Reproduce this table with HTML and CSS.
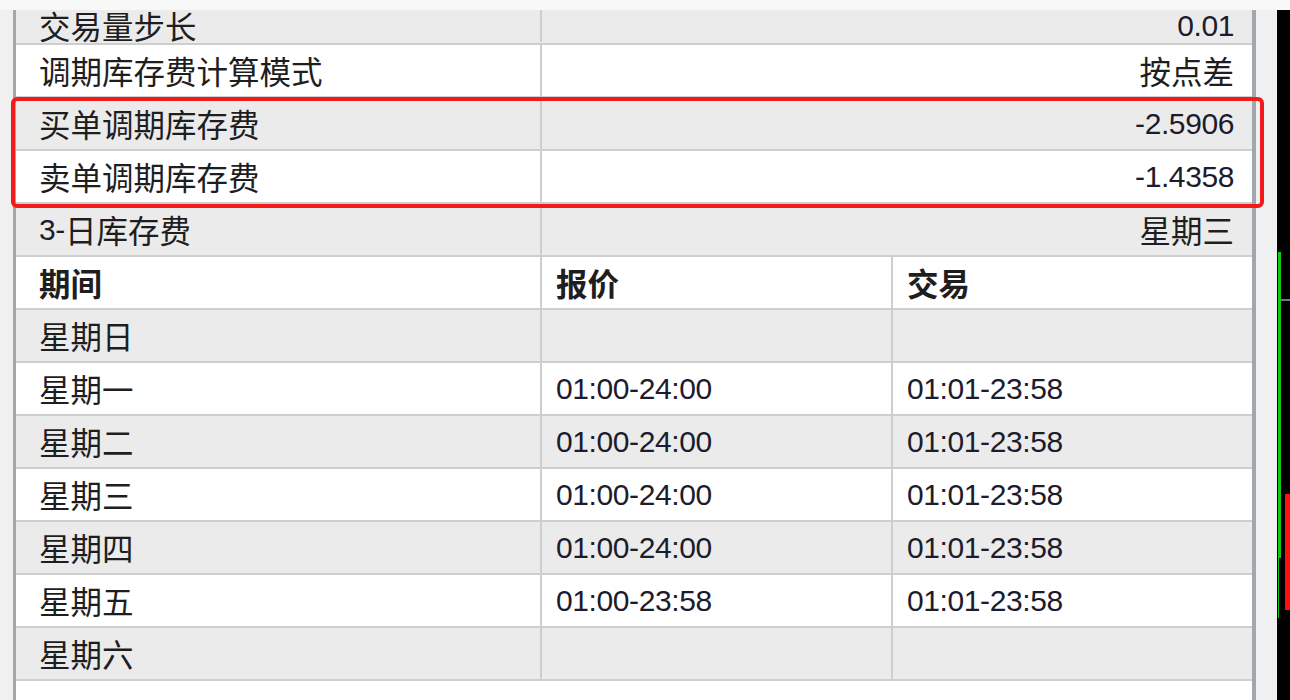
FILE: index.html
```html
<!DOCTYPE html>
<html lang="zh-CN">
<head>
<meta charset="utf-8">
<title>Symbol properties</title>
<link rel="stylesheet" href="styles.css">
</head>
<body>
<div class="screen">
  <div class="top-strip"></div>
  <div class="main">
    <div class="gutter"></div>
    <div class="vline"></div>
    <div class="panel">
      <div class="row two gray first">
        <div class="cell label">交易量步长</div>
        <div class="cell value num">0.01</div>
      </div>
      <div class="row two">
        <div class="cell label">调期库存费计算模式</div>
        <div class="cell value">按点差</div>
      </div>
      <div class="row two gray">
        <div class="cell label">买单调期库存费</div>
        <div class="cell value num">-2.5906</div>
      </div>
      <div class="row two">
        <div class="cell label">卖单调期库存费</div>
        <div class="cell value num">-1.4358</div>
      </div>
      <div class="row two gray">
        <div class="cell label"><span class="num">3-</span>日库存费</div>
        <div class="cell value">星期三</div>
      </div>
      <div class="row three head">
        <div class="cell label">期间</div>
        <div class="cell">报价</div>
        <div class="cell">交易</div>
      </div>
      <div class="row three gray">
        <div class="cell label">星期日</div>
        <div class="cell"></div>
        <div class="cell"></div>
      </div>
      <div class="row three">
        <div class="cell label">星期一</div>
        <div class="cell num">01:00-24:00</div>
        <div class="cell num">01:01-23:58</div>
      </div>
      <div class="row three gray">
        <div class="cell label">星期二</div>
        <div class="cell num">01:00-24:00</div>
        <div class="cell num">01:01-23:58</div>
      </div>
      <div class="row three">
        <div class="cell label">星期三</div>
        <div class="cell num">01:00-24:00</div>
        <div class="cell num">01:01-23:58</div>
      </div>
      <div class="row three gray">
        <div class="cell label">星期四</div>
        <div class="cell num">01:00-24:00</div>
        <div class="cell num">01:01-23:58</div>
      </div>
      <div class="row three">
        <div class="cell label">星期五</div>
        <div class="cell num">01:00-23:58</div>
        <div class="cell num">01:01-23:58</div>
      </div>
      <div class="row three gray">
        <div class="cell label">星期六</div>
        <div class="cell"></div>
        <div class="cell"></div>
      </div>
    </div>
    <div class="vline right"></div>
    <div class="gap"></div>
    <div class="chart">
      <div class="bar-green"></div>
      <div class="bar-green-thin"></div>
      <div class="bar-red"></div>
      <div class="level"></div>
    </div>
  </div>
  <div class="highlight"></div>
</div>
</body>
</html>
```
FILE: styles.css
```css
html, body {
  margin: 0;
  padding: 0;
  background: #f7f7f7;
}

.screen {
  position: relative;
  width: 1290px;
  height: 700px;
  overflow: hidden;
  display: flex;
  flex-direction: column;
  font-family: "Noto Sans CJK SC", "Liberation Sans", sans-serif;
  color: #1e1e1e;
}

.top-strip {
  height: 10px;
  background: #f8f8f8;
  flex: none;
}

.main {
  flex: 1;
  display: flex;
  min-height: 0;
}

.gutter {
  width: 13px;
  background: #f0f0f0;
  flex: none;
}

.vline {
  width: 3px;
  background: #a2a6ad;
  flex: none;
}

.vline.right {
  width: 4px;
}

.panel {
  width: 1236px;
  flex: none;
  background: #ffffff;
  overflow: hidden;
}

.row {
  display: grid;
  height: 53px;
  box-sizing: border-box;
  border-bottom: 2px solid #cecece;
  background: #ffffff;
}

.row.gray {
  background: #ebebeb;
}

.row.first {
  height: 35px;
  padding-bottom: 2px;
}

.row.two {
  grid-template-columns: 524px 1fr;
}

.row.three {
  grid-template-columns: 524px 351px 1fr;
}

.cell {
  display: flex;
  align-items: center;
  box-sizing: border-box;
  padding-left: 14px;
  font-size: 31.5px;
  line-height: 1;
  white-space: nowrap;
}

.cell + .cell {
  border-left: 2px solid #cecece;
}

.cell.label {
  padding-left: 23px;
}

.cell.value {
  justify-content: flex-end;
  padding-right: 18px;
}

.head .cell {
  font-weight: bold;
}

.num {
  font-family: "Liberation Sans", "DejaVu Sans", sans-serif;
  font-size: 30px;
  letter-spacing: -0.4px;
  color: #1c1c2c;
}

.gap {
  width: 21px;
  background: #f0f0f0;
  flex: none;
}

.chart {
  position: relative;
  flex: 1;
  background: #000000;
}

.bar-green {
  position: absolute;
  left: 1px;
  top: 242px;
  width: 3px;
  height: 306px;
  background: #14c814;
}

.bar-green-thin {
  position: absolute;
  left: 1px;
  top: 548px;
  width: 1px;
  height: 60px;
  background: #14c814;
}

.bar-red {
  position: absolute;
  left: 8px;
  top: 484px;
  width: 5px;
  height: 116px;
  background: #ff1010;
}

.level {
  position: absolute;
  left: 4px;
  top: 289px;
  width: 9px;
  height: 2px;
  background: #6c7894;
}

.highlight {
  position: absolute;
  left: 11px;
  top: 97px;
  width: 1253px;
  height: 111px;
  box-sizing: border-box;
  border: 4px solid #f21a1a;
  border-radius: 6px;
  pointer-events: none;
}
```
